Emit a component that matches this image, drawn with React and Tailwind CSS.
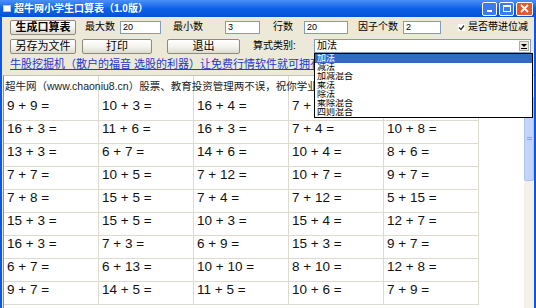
import React from 'react';

const rows = [
  ['9 + 9 =', '10 + 3 =', '16 + 4 =', '7 + 9 =', '10 + 6 ='],
  ['16 + 3 =', '11 + 6 =', '16 + 3 =', '7 + 4 =', '10 + 8 ='],
  ['13 + 3 =', '6 + 7 =', '14 + 6 =', '10 + 4 =', '8 + 6 ='],
  ['7 + 7 =', '10 + 5 =', '7 + 12 =', '10 + 7 =', '9 + 7 ='],
  ['7 + 8 =', '15 + 5 =', '7 + 4 =', '7 + 12 =', '5 + 15 ='],
  ['15 + 3 =', '15 + 5 =', '10 + 3 =', '15 + 4 =', '12 + 7 ='],
  ['16 + 3 =', '7 + 3 =', '6 + 9 =', '15 + 3 =', '9 + 7 ='],
  ['6 + 7 =', '6 + 13 =', '10 + 10 =', '8 + 10 =', '12 + 8 ='],
  ['9 + 7 =', '14 + 5 =', '11 + 5 =', '10 + 6 =', '7 + 9 ='],
];

const kinds = ['加法', '减法', '加减混合', '乘法', '除法', '乘除混合', '四则混合'];

const Btn = ({ children, bold, className = '' }) => (
  <div
    className={`flex items-center justify-center h-[15px] rounded-[2px] border border-[#8d8b80] bg-gradient-to-b from-white via-[#f5f4ee] to-[#dedcd0] text-[11px] leading-none text-black ${bold ? 'font-bold' : ''} ${className}`}
  >
    {children}
  </div>
);

const Field = ({ value, className = '' }) => (
  <div
    className={`h-[13px] bg-white border border-[#7f9db9] pl-[2px] text-[9px] leading-[11px] text-black ${className}`}
  >
    {value}
  </div>
);

const Label = ({ children, className = '' }) => (
  <span className={`text-[10px] leading-none text-black whitespace-nowrap ${className}`}>{children}</span>
);

const App = () => {
  return (
    <div className="w-[536px] h-[308px] overflow-hidden flex flex-col bg-[#ece9d8] font-['Liberation_Sans','Noto_Sans_CJK_SC',sans-serif]">
      {/* title bar */}
      <div className="h-[17px] shrink-0 flex items-center pl-[3px] pr-[3px] bg-gradient-to-b from-[#4a90f8] via-[#0d61e8] to-[#0553d6]">
        <div className="w-[8px] h-[7px] bg-white border border-[#b8c8e8] mr-[3px]" />
        <span className="text-white text-[10px] font-bold leading-none">超牛网小学生口算表（1.0版）</span>
        <div className="ml-auto flex gap-[2px]">
          <div className="w-[15px] h-[14px] rounded-[2px] border border-white bg-[#3a7cf0] flex items-end justify-center pb-[3px]">
            <div className="w-[5px] h-[2px] bg-white" />
          </div>
          <div className="w-[15px] h-[14px] rounded-[2px] border border-white bg-[#3a7cf0] flex items-center justify-center">
            <div className="w-[8px] h-[7px] border border-white border-t-2" />
          </div>
          <div className="w-[17px] h-[14px] rounded-[2px] border border-white bg-[#e05a30] flex items-center justify-center">
            <svg width="9" height="9" viewBox="0 0 9 9">
              <path d="M1 1 L8 8 M8 1 L1 8" stroke="white" strokeWidth="1.8" />
            </svg>
          </div>
        </div>
      </div>

      <div className="flex-1 flex flex-col border-x-2 border-[#0a58e2] min-h-0">
        {/* row 1 */}
        <div className="h-[20px] shrink-0 flex items-center pl-[8px]">
          <Btn bold className="w-[66px]">生成口算表</Btn>
          <Label className="ml-[9px] w-[31px]">最大数</Label>
          <Field value="20" className="ml-[4px] w-[41px]" />
          <Label className="ml-[12px] w-[32px]">最小数</Label>
          <Field value="3" className="ml-[20px] w-[35px]" />
          <Label className="ml-[13px] w-[21px]">行数</Label>
          <Field value="20" className="ml-[10px] w-[44px]" />
          <Label className="ml-[10px] w-[42px]">因子个数</Label>
          <Field value="2" className="ml-[3px] w-[38px]" />
          <div className="ml-[17px] w-[7px] h-[7px] bg-white flex items-center justify-center">
            <svg width="7" height="7" viewBox="0 0 7 7">
              <path d="M1 3.5 L3 5.5 L6 1.5" stroke="#333" strokeWidth="1.3" fill="none" />
            </svg>
          </div>
          <Label className="ml-[3px]">是否带进位减</Label>
        </div>

        {/* row 2 */}
        <div className="h-[18px] shrink-0 flex items-center pl-[8px] relative z-10">
          <Btn className="w-[66px]">另存为文件</Btn>
          <Btn className="ml-[6px] w-[70px]">打印</Btn>
          <Btn className="ml-[15px] w-[73px]">退出</Btn>
          <Label className="ml-[13px] w-[53px]">算式类别:</Label>
          <div className="relative ml-[8px] w-[217px] h-[14px] bg-white border border-[#7f9db9] flex items-center">
            <span className="pl-[2px] text-[10px] leading-none text-black">加法</span>
            <div className="ml-auto mr-[1px] w-[10px] h-[10px] bg-[#ece9d8] border border-[#b0ada0] flex flex-col items-center justify-center gap-[1px]">
              <svg width="6" height="3" viewBox="0 0 6 3">
                <path d="M0 0 L6 0 L3 3 Z" fill="#000" />
              </svg>
              <div className="w-[6px] h-[1px] bg-black" />
            </div>
            <div className="absolute top-[13px] -left-[1px] w-[219px] bg-white border border-black">
              {kinds.map((k, i) => (
                <div
                  key={k}
                  className={`h-[9px] overflow-hidden pl-[2px] text-[9px] leading-[9px] whitespace-nowrap ${i === 0 ? 'bg-[#316ac5] text-white' : 'text-black'}`}
                >
                  {k}
                </div>
              ))}
            </div>
          </div>
        </div>

        {/* link row */}
        <div className="h-[18px] shrink-0 flex items-center pl-[8px]">
          <span className="text-[11px] leading-none text-[#2437d0] underline whitespace-nowrap">
            牛股挖掘机（散户的福音 选股的利器）让免费行情软件就可拥有更多专业功能
          </span>
        </div>

        {/* content panel */}
        <div className="flex-1 mt-[2px] ml-[1px] flex bg-white border-l border-l-[#8e8c84] border-t border-t-[#c8c5b8] min-h-0">
          <div className="w-[475px] shrink-0 flex flex-col">
            <div className="relative h-[22px] flex">
              {[0, 1, 2, 3, 4].map((i) => (
                <div key={i} className="w-[95px] border-r border-[#dddad0]" />
              ))}
              <span className="absolute left-[1px] top-[4px] text-[10.5px] leading-[13px] text-[#222] whitespace-nowrap">
                超牛网（www.chaoniu8.cn）股票、教育投资管理两不误，祝你学业进步！
              </span>
            </div>
            {rows.map((r, ri) => (
              <div key={ri} className="h-[23px] flex">
                {r.map((c, ci) => (
                  <div
                    key={ci}
                    className="w-[95px] border-r border-b border-[#dddad0] pl-[3px] text-[13.5px] leading-[15px] text-[#111] whitespace-nowrap"
                  >
                    {c}
                  </div>
                ))}
              </div>
            ))}
          </div>
          <div className="flex-1" />
          <div className="w-[10px] shrink-0 bg-[#f3f1ea] flex flex-col">
            <div className="h-[20px]" />
            <div className="h-[85px] bg-[#c2d4fb] border border-[#aec3ef] rounded-[2px] flex items-center justify-center">
              <div className="w-[5px] h-[3px] border-y border-[#8aa6e0]" />
            </div>
          </div>
        </div>
      </div>
    </div>
  );
};

export default App;
